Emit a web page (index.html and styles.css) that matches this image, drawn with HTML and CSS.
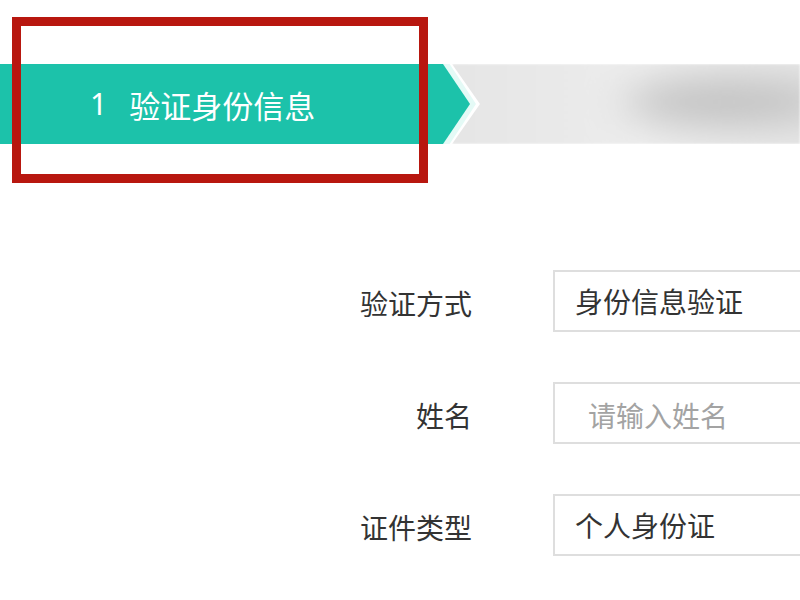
FILE: index.html
```html
<!DOCTYPE html>
<html lang="zh-CN">
<head>
<meta charset="utf-8">
<title>验证身份信息</title>
<link rel="stylesheet" href="styles.css">
</head>
<body>
<div class="page">
  <div class="steps">
    <div class="step-glow">
      <div class="step step-active">
        <span class="step-num">1</span><span class="step-name">验证身份信息</span>
      </div>
    </div>
    <div class="step step-next">
      <div class="step-blur"></div>
    </div>
    <div class="highlight"></div>
  </div>

  <div class="form">
    <div class="label">验证方式</div>
    <div class="field"><span class="value">身份信息验证</span></div>

    <div class="label">姓名</div>
    <div class="field"><span class="placeholder">请输入姓名</span></div>

    <div class="label">证件类型</div>
    <div class="field"><span class="value">个人身份证</span></div>
  </div>
</div>
</body>
</html>
```

FILE: styles.css
```css
html, body {
  margin: 0;
  padding: 0;
  background: #ffffff;
  overflow: hidden;
  width: 800px;
  height: 600px;
}

body {
  font-family: "Noto Sans CJK SC", "Noto Sans", sans-serif;
}

.page {
  padding-top: 64px;
  width: 800px;
  overflow: hidden;
}

.steps {
  position: relative;
  display: flex;
  height: 80px;
}

.step-glow {
  width: 476px;
  height: 80px;
  flex: none;
  background: #e4faf6;
  clip-path: polygon(0 -4px, 447px -4px, 476px 50%, 447px calc(100% + 4px), 0 calc(100% + 4px));
  position: relative;
  z-index: 2;
}

.step {
  height: 80px;
  box-sizing: border-box;
}

.step-active {
  width: 470px;
  background: #1cc2aa;
  clip-path: polygon(0 0, 443px 0, 470px 50%, 443px 100%, 0 100%);
  color: #ffffff;
  display: flex;
  align-items: center;
  padding-left: 90px;
  font-size: 31px;
  line-height: 1;
}

.step-num {
  margin-right: 22px;
  font-family: "Noto Sans", sans-serif;
  font-size: 30px;
}

.step-next {
  flex: 1;
  margin-left: -24px;
  background: linear-gradient(90deg, #e6e6e6 0%, #eaeaea 35%, #efefef 55%, #e8e8e8 100%);
  clip-path: polygon(0 0, 100% 0, 100% 100%, 0 100%, 28px 50%);
  position: relative;
  overflow: hidden;
  filter: blur(1px);
}

.step-blur {
  position: absolute;
  left: 170px;
  top: 16px;
  width: 210px;
  height: 44px;
  border-radius: 50%;
  background: #bdbdbd;
  filter: blur(20px);
}

.highlight {
  position: absolute;
  left: 12px;
  top: -47px;
  width: 416px;
  height: 166px;
  box-sizing: border-box;
  border: 9px solid #b8170f;
  z-index: 3;
}

.form {
  margin-top: 126px;
  display: grid;
  grid-template-columns: 472px 1fr;
  column-gap: 81px;
  row-gap: 50px;
  grid-auto-rows: 62px;
  align-items: center;
  margin-right: -40px;
}

.label {
  text-align: right;
  font-size: 28px;
  color: #333333;
  line-height: 1;
  padding-top: 4px;
}

.field {
  height: 62px;
  box-sizing: border-box;
  border: 2px solid #dedede;
  display: flex;
  align-items: center;
  padding-left: 20px;
  font-size: 28px;
  line-height: 1;
}

.value {
  color: #333333;
}

.placeholder {
  color: #a3a3a3;
  padding-left: 13px;
  padding-top: 4px;
}
```
